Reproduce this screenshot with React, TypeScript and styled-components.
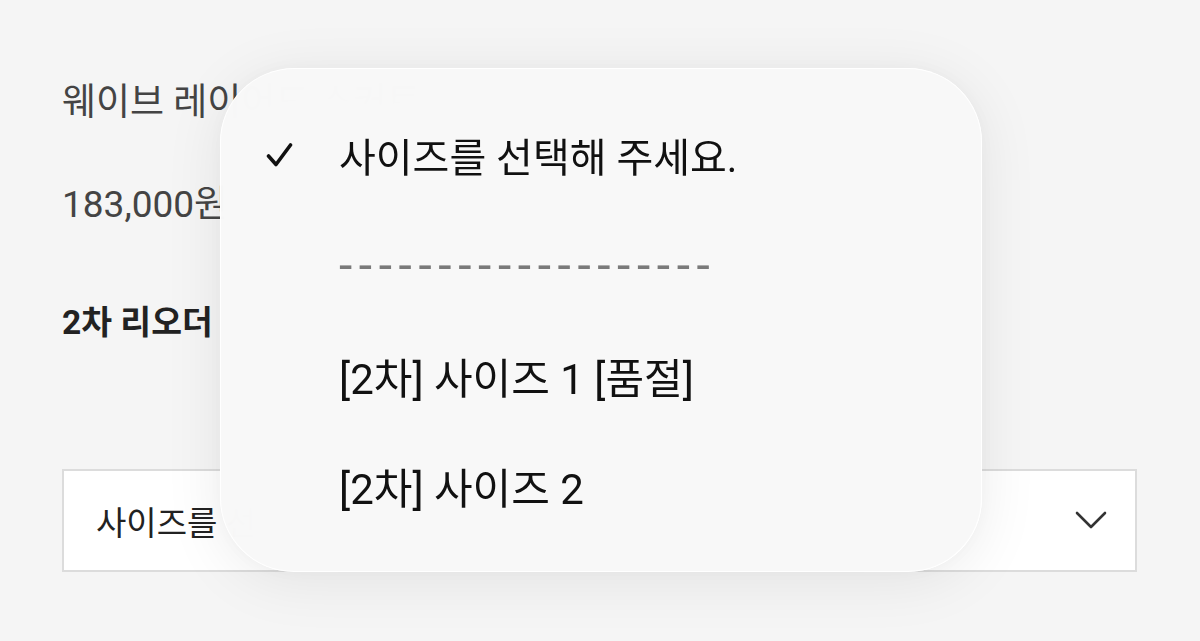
import React from 'react';
import styled, { createGlobalStyle } from 'styled-components';

const Global = createGlobalStyle`
  html, body { margin: 0; padding: 0; }
  body {
    background: #f5f5f5;
    font-family: Roboto, "Noto Sans CJK KR", "Noto Sans", sans-serif;
    overflow: hidden;
  }
`;

const Page = styled.div`
  position: relative;
  width: 1200px;
  height: 641px;
  overflow: hidden;
  background: #f5f5f5;
`;

const Content = styled.div`
  display: flex;
  flex-direction: column;
  padding: 79px 63px 0 62px;
`;

const Title = styled.div`
  font-size: 37px;
  line-height: 48px;
  color: #444;
  white-space: nowrap;
`;

const Price = styled.div`
  margin-top: 54px;
  font-size: 37px;
  line-height: 48px;
  color: #444;
  white-space: nowrap;
`;

const Label = styled.div`
  margin-top: 72px;
  font-size: 33.5px;
  line-height: 44px;
  font-weight: 700;
  color: #222;
  white-space: nowrap;
`;

const SelectBox = styled.div`
  margin-top: 124px;
  box-sizing: border-box;
  height: 103px;
  border: 2px solid #dcdcdc;
  background: #fff;
  display: flex;
  align-items: center;
  justify-content: space-between;
  padding: 0 28px 0 32px;
  font-size: 33px;
  color: #222;
`;

const Chevron = () => (
  <svg width="32" height="19" viewBox="0 0 32 19" fill="none">
    <polyline points="2,2 16,16 30,2" stroke="#333" strokeWidth="2.6" strokeLinecap="round" strokeLinejoin="round" />
  </svg>
);

const Menu = styled.div`
  position: absolute;
  left: 220px;
  top: 68px;
  width: 762px;
  height: 504px;
  box-sizing: border-box;
  padding: 31px 0 0 45px;
  border-radius: 74px;
  background: rgba(248, 248, 248, 0.98);
  backdrop-filter: blur(24px);
  -webkit-backdrop-filter: blur(24px);
  border: 1.5px solid rgba(255, 255, 255, 0.95);
  box-shadow: 0 8px 60px rgba(0, 0, 0, 0.08), 0 0 24px rgba(0, 0, 0, 0.03);
  display: flex;
  flex-direction: column;
`;

const Option = styled.div<{ $size?: number }>`
  display: grid;
  grid-template-columns: 73px 1fr;
  align-items: center;
  height: 110px;
  font-size: ${(p) => p.$size ?? 40}px;
  color: #111;
  white-space: nowrap;
`;

const Divider = styled.span`
  font-size: 48px;
  letter-spacing: 6.6px;
  color: #7a7a7a;
`;

const Check = () => (
  <svg width="27" height="26" viewBox="0 0 27 26" fill="none">
    <polyline points="2.5,14 10,22.5 24.5,3" stroke="#111" strokeWidth="3.6" strokeLinecap="round" strokeLinejoin="round" />
  </svg>
);

export default function App() {
  return (
    <Page>
      <Global />
      <Content>
        <Title>웨이브 레이어드 스커트</Title>
        <Price>183,000원</Price>
        <Label>2차 리오더</Label>
        <SelectBox>
          <span>사이즈를 선택해 주세요.</span>
          <Chevron />
        </SelectBox>
      </Content>
      <Menu>
        <Option $size={40}>
          <Check />
          <span>사이즈를 선택해 주세요.</span>
        </Option>
        <Option>
          <span />
          <Divider>-------------------</Divider>
        </Option>
        <Option $size={42}>
          <span />
          <span>[2차] 사이즈 1 [품절]</span>
        </Option>
        <Option $size={42}>
          <span />
          <span>[2차] 사이즈 2</span>
        </Option>
      </Menu>
    </Page>
  );
}
